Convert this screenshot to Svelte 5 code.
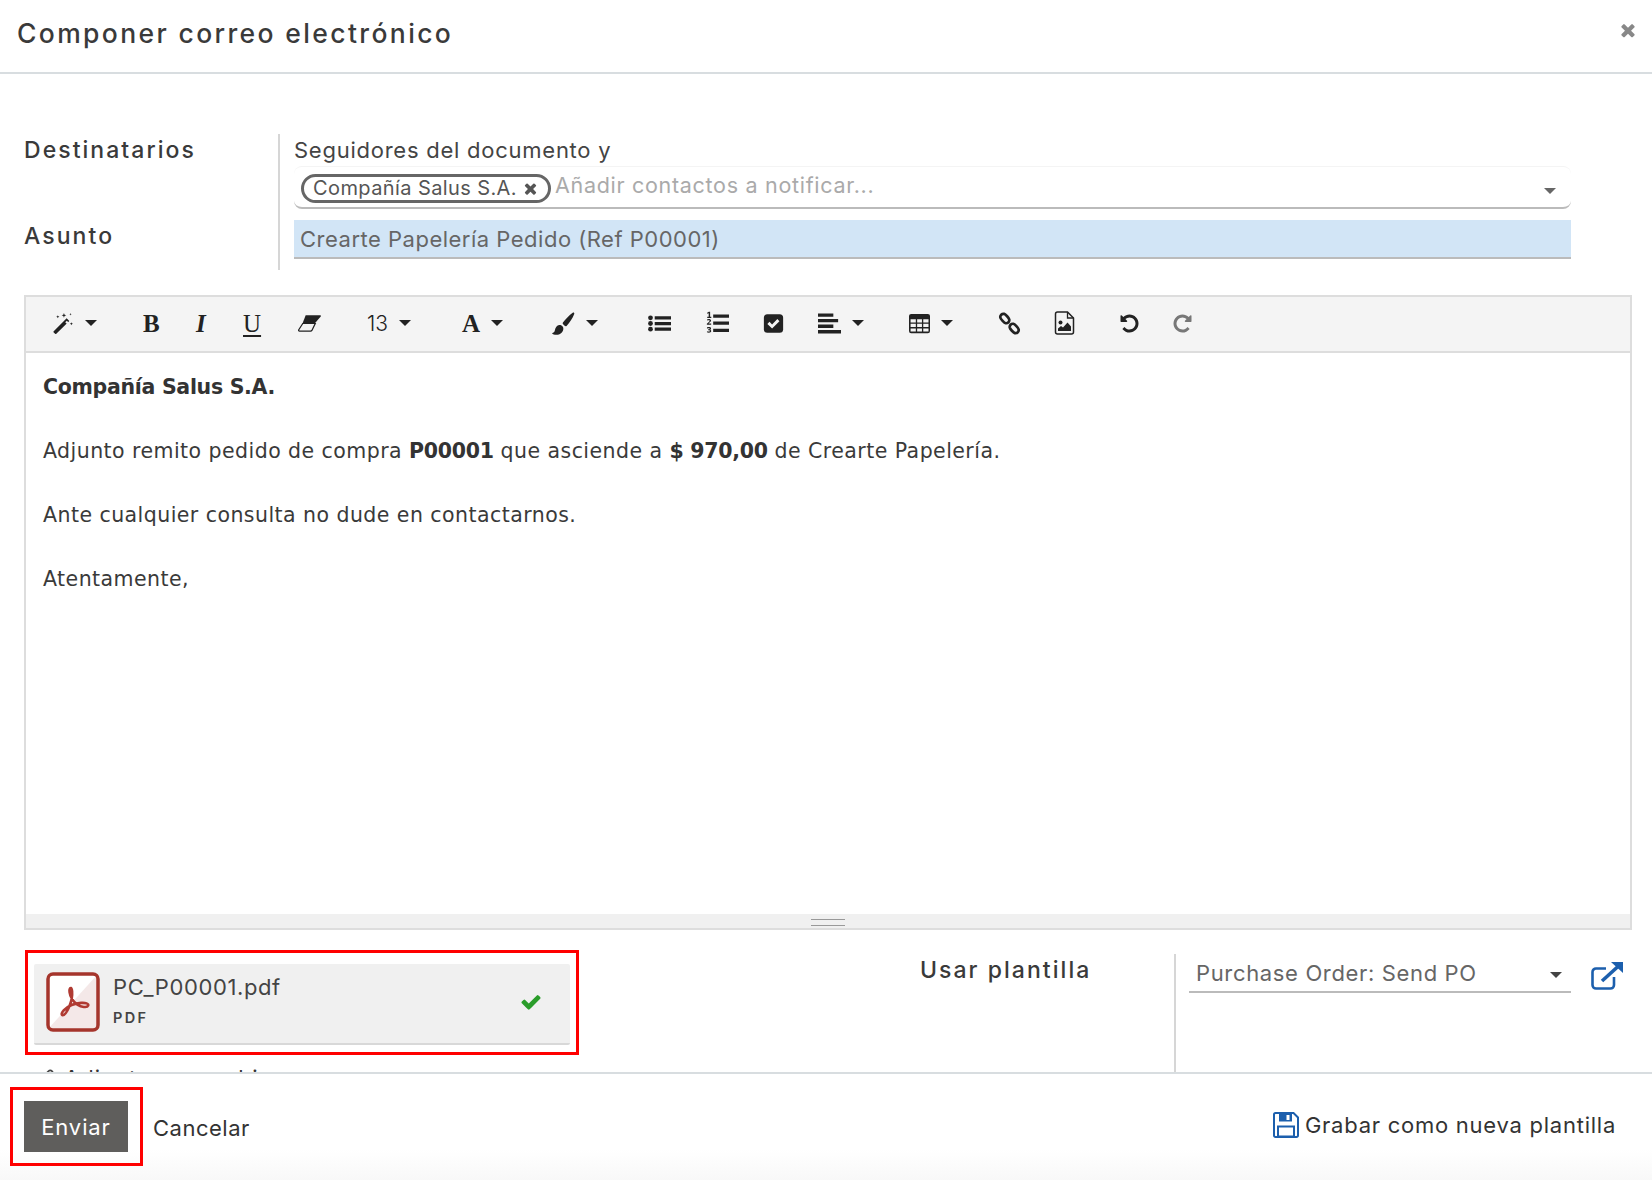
<script>
  const tools = [
    { t: 'wand', caret: true, w: 90 },
    { t: 'B', cls: 'serif bold', w: 53 },
    { t: 'I', cls: 'serif bold italic', w: 47 },
    { t: 'U', cls: 'serif under', w: 55 },
    { t: 'eraser', w: 69 },
    { t: '13', caret: true, cls: 'size', w: 95 },
    { t: 'A', caret: true, cls: 'serif bold', w: 90 },
    { t: 'brush', caret: true, w: 96 },
    { t: 'ul', w: 58 },
    { t: 'ol', w: 57 },
    { t: 'check', w: 55 },
    { t: 'align', caret: true, w: 91 },
    { t: 'table', caret: true, w: 89 },
    { t: 'link', w: 56 },
    { t: 'image', w: 65 },
    { t: 'undo', w: 53 },
    { t: 'redo', w: 30 }
  ];
  const times = 'M1490 1322q0 40-28 68l-136 136q-28 28-68 28t-68-28l-294-294-294 294q-28 28-68 28t-68-28l-136-136q-28-28-28-68t28-68l294-294-294-294q-28-28-28-68t28-68l136-136q28-28 68-28t68 28l294 294 294-294q28-28 68-28t68 28l136 136q28 28 28 68t-28 68l-294 294 294 294q28 28 28 68z';
</script>

<div class="modal">
  <header class="head">
    <h1>Componer correo electrónico</h1>
    <svg class="close" viewBox="0 0 1792 1792"><path d={times}/></svg>
  </header>

  <main class="body">
    <section class="fields">
      <div class="labels">
        <span class="lab first">Destinatarios</span>
        <span class="lab">Asunto</span>
      </div>
      <div class="values">
        <div class="followers">Seguidores del documento y</div>
        <div class="many">
          <span class="tag">Compañía Salus S.A.
            <svg viewBox="0 0 1792 1792"><path d={times}/></svg>
          </span>
          <span class="placeholder">Añadir contactos a notificar...</span>
          <i class="tri grey"></i>
        </div>
        <div class="subject">Crearte Papelería Pedido (Ref P00001)</div>
      </div>
    </section>

    <section class="editor">
      <div class="toolbar">
        {#each tools as item}
          <span class="tool {item.cls ?? ''}" style="width:{item.w}px">
            {#if item.t === 'wand'}
              <svg class="ico" viewBox="0 0 24 24"><path d="M0.800 20.800 15.600 6l3 3L3.800 23.800a1 1 0 0 1-1.400 0L.800 22.200a1 1 0 0 1 0-1.400z"/><path d="M14 10.600l2 2 1.800-1.800-2-2z" fill="#f4f4f4"/><path d="M12.500 0l.7 2 2 .7-2 .7-.7 2-.7-2-2-.7 2-.7zM5.500 2.500l.5 1.300 1.300.5-1.300.5-.5 1.300-.5-1.300-1.300-.5 1.300-.5zM21 10.500l.5 1.300 1.300.5-1.300.5-.5 1.300-.5-1.300-1.300-.5 1.300-.5zM20 0l.4 1 1 .4-1 .4-.4 1-.4-1-1-.4 1-.4z"/></svg>
            {:else if item.t === 'eraser'}
              <svg class="ico wide" viewBox="0 0 24 18"><path d="M8 .5h15c.8 0 1 .6.700 1.200L17 9.500H4.500z"/><path d="M5 9 .8 15.500c-.4.7 0 1.500.8 1.500h11.500c.6 0 1.100-.3 1.400-.8L18 9z" fill="#f4f4f4" stroke="#222" stroke-width="1.300"/></svg>
            {:else if item.t === 'brush'}
              <svg class="ico big" viewBox="0 0 24 24"><path d="M21.600 .7c1-.7 2 .2 1.600 1.300-1.700 4.400-4.700 9-8 12.500-.6.600-1.400.5-2-.1l-1.600-1.600c-.6-.6-.6-1.300 0-2 2.800-3.800 6.400-7.500 10-10.100z"/><path d="M7.500 13.500c2.200-.3 4.800 1.600 4.300 4.400-.5 3.400-3.500 5.900-7.200 5.900-2 0-3.800-.7-4.600-1.700 1.500-.6 2.700-1.200 3-3.100.3-2.600 2.300-5.200 4.500-5.500z"/></svg>
            {:else if item.t === 'ul'}
              <svg class="ico wide" viewBox="0 0 24 18"><path d="M7 1.500h17v3.300H7zM7 7.400h17v3.300H7zM7 13.300h17v3.300H7z"/><circle cx="2.600" cy="3.100" r="2.500"/><circle cx="2.600" cy="9" r="2.500"/><circle cx="2.600" cy="14.900" r="2.500"/></svg>
            {:else if item.t === 'ol'}
              <svg class="ico wide tall" viewBox="0 0 24 24"><path d="M7.500 3h16.500v3.400H7.500zM7.500 10.500h16.500v3.400H7.500zM7.500 18h16.500v3.400H7.500z"/><path d="M1.200 1.200 3 .3h1.300v5.200h1.200v1.200H1.300V5.500h1.500V1.900l-1.600.5zM1 8.300c1.500-.9 4.300-.7 4.300 1.200 0 1.100-1 1.700-2.700 3h2.800v1.300H.9v-1c1.700-1.600 2.900-2.400 2.900-3.100 0-.8-1.500-.6-2.600-.2zM1 16.700c1.400-.7 4.300-.6 4.300 1.100 0 .6-.4 1-.9 1.200.7.200 1.100.7 1.100 1.400 0 2-3 2.100-4.500 1.300v-1.200c1.100.6 3 .7 3-.2 0-.6-.7-.7-1.800-.7v-1.100c1 0 1.600-.1 1.600-.6 0-.7-1.700-.5-2.800 0z"/></svg>
            {:else if item.t === 'check'}
              <svg class="ico" viewBox="0 0 24 24"><rect x="1" y="1.500" width="22" height="21" rx="4"/><path d="M5 12.500 7.400 10l3 3 6-6.200 2.400 2.500-8.400 8.400z" fill="#f4f4f4"/></svg>
            {:else if item.t === 'align'}
              <svg class="ico wide" viewBox="0 0 24 21"><path d="M0 0h16v3.500H0zM0 5.800h21v3.500H0zM0 11.600h16v3.500H0zM0 17.400h24v3.500H0z"/></svg>
            {:else if item.t === 'table'}
              <svg class="ico" viewBox="0 0 24 22"><path fill-rule="evenodd" d="M2.500 0h19A2.500 2.500 0 0 1 24 2.500v17a2.500 2.500 0 0 1-2.500 2.500h-19A2.500 2.500 0 0 1 0 19.500v-17A2.500 2.500 0 0 1 2.500 0zM1.800 6v3.800h6V6zm7.500 0v3.800h5.500V6zm7 0v3.800h6V6zM1.800 11.300v3.800h6v-3.800zm7.500 0v3.800h5.500v-3.800zm7 0v3.800h6v-3.800zM1.800 16.600v3.600h6v-3.600zm7.500 0v3.600h5.500v-3.600zm7 0v3.600h6v-3.600z"/></svg>
            {:else if item.t === 'link'}
              <svg class="ico big" viewBox="0 0 24 24" stroke="#222" stroke-width="2.800"><path fill="none" d="M6.500 2c-2.400-.6-4.600 1.600-4 4 .3 1.300 4 5.400 5.500 5.700 2.300.4 4.200-1.700 3.700-4C11.300 6.200 8 2.400 6.500 2zM17.500 22c2.400.6 4.600-1.600 4-4-.3-1.300-4-5.400-5.500-5.700-2.300-.4-4.200 1.700-3.700 4 .4 1.500 3.700 5.300 5.200 5.700z"/></svg>
            {:else if item.t === 'image'}
              <svg class="ico tall" viewBox="0 0 20 24"><path d="M3 1h10l6 6v14a2 2 0 0 1-2 2H3a2 2 0 0 1-2-2V3a2 2 0 0 1 2-2z" fill="#f4f4f4" stroke="#222" stroke-width="1.500"/><path d="M13 1v6h6" fill="none" stroke="#222" stroke-width="1.300"/><circle cx="6" cy="11.500" r="2"/><path d="M3.500 20v-2.500l3-2.500 2 1.500 4.500-5 3.500 4V20z"/></svg>
            {:else if item.t === 'undo'}
              <svg class="ico" viewBox="0 0 1792 1792"><path d="M1664 896q0 156-61 298t-164 245-245 164-298 61q-172 0-327-72.500t-264-204.500q-7-10-6.500-22.500t8.500-20.500l137-138q10-9 25-9 16 2 23 12 73 95 179 147t225 52q104 0 198.500-40.500t163.500-109.500 109.500-163.500 40.500-198.500-40.500-198.500-109.500-163.500-163.500-109.500-198.500-40.500q-98 0-188 35.500t-160 101.500l137 138q31 30 14 69-17 40-59 40h-448q-26 0-45-19t-19-45v-448q0-42 40-59 39-17 69 14l130 129q107-101 244.500-156.500t284.500-55.500q156 0 298 61t245 164 164 245 61 298z"/></svg>
            {:else if item.t === 'redo'}
              <svg class="ico muted" viewBox="0 0 1792 1792"><path d="M1664 256v448q0 26-19 45t-45 19h-448q-42 0-59-40-17-39 14-69l138-138q-148-137-349-137-104 0-198.500 40.500t-163.500 109.500-109.500 163.500-40.500 198.500 40.500 198.500 109.500 163.500 163.500 109.500 198.500 40.500q119 0 225-52t179-147q7-10 23-12 15 0 25 9l137 138q9 8 9.500 20.500t-7.500 22.500q-109 132-264 204.500t-327 72.500q-156 0-298-61t-245-164-164-245-61-298 61-298 164-245 245-164 298-61q147 0 284.500 55.500t244.500 156.500l130-129q29-31 70-14 39 17 39 59z"/></svg>
            {:else}
              {item.t}
            {/if}
            {#if item.caret}<i class="tri"></i>{/if}
          </span>
        {/each}
      </div>
      <div class="content">
        <p><b>Compañía Salus S.A.</b></p>
        <p>Adjunto remito pedido de compra <b>P00001</b> que asciende a <b>$ 970,00</b> de Crearte Papelería.</p>
        <p>Ante cualquier consulta no dude en contactarnos.</p>
        <p>Atentamente,</p>
      </div>
      <div class="resize"><span></span></div>
    </section>

    <section class="lower">
      <div class="left">
        <div class="redbox">
          <div class="attach">
            <svg class="pdf" viewBox="0 0 54 60">
              <rect x="2" y="2" width="50" height="56" rx="5" fill="#fff"/>
              <path d="M3 56 51 3v50a4 4 0 0 1-4 4H4z" fill="#f4e8e8"/>
              <rect x="2" y="2" width="50" height="56" rx="5" fill="none" stroke="#a5352c" stroke-width="3.500"/>
              <path d="M25 16c-1.500-.2-1.700 2-1.400 4.300.6 4.200 4 9.500 7.800 12.300 3.800 2.400 9.800 3.500 10.800 1 .6-2-2.600-3-7-2.700-6 .4-13.400 3.500-17.300 7.300-2.200 2.300-3 4.600-1.300 4.900 2 .2 4.600-3.800 6.500-8.200 2-4.700 3.400-11.200 3-15.500-.2-2-.8-3.300-1.100-3.400z" fill="none" stroke="#b03a32" stroke-width="2.600"/>
            </svg>
            <div class="fileinfo">
              <div class="fname">PC_P00001.pdf</div>
              <div class="ftype">PDF</div>
            </div>
            <svg class="tick" viewBox="0 0 1792 1792"><path d="M1671 566q0 40-28 68l-724 724-136 136q-28 28-68 28t-68-28l-136-136-362-362q-28-28-28-68t28-68l136-136q28-28 68-28t68 28l294 295 656-657q28-28 68-28t68 28l136 136q28 28 28 68z"/></svg>
          </div>
        </div>
        <div class="addfile">
          <svg viewBox="0 0 24 24"><path fill="none" stroke="#444" stroke-width="2" d="M19 11 11 19a5 5 0 0 1-7-7l9-9a3.500 3.500 0 0 1 5 5l-9 9a1.500 1.500 0 0 1-2-2l8-8"/></svg>
          Adjuntar un archivo
        </div>
      </div>
      <div class="tpl">
        <div class="tpl-label">Usar plantilla</div>
        <div class="tpl-value">
          <div class="select"><span>Purchase Order: Send PO</span><i class="tri dark"></i></div>
          <svg class="ext" viewBox="0 0 32 28"><path d="M23 15v8a3.500 3.500 0 0 1-3.500 3.500H5A3.500 3.500 0 0 1 1.500 23V10A3.500 3.500 0 0 1 5 6.500h10" fill="none" stroke="#1c5fad" stroke-width="2.600"/><path d="M11 19 27 4.500" fill="none" stroke="#1c5fad" stroke-width="3.600"/><path d="M32 0H20l12 11z" fill="#1c5fad"/></svg>
        </div>
      </div>
    </section>
  </main>

  <footer class="foot">
    <div class="redbtn"><button class="send">Enviar</button></div>
    <span class="cancel">Cancelar</span>
    <span class="savetpl">
      <svg viewBox="0 0 26 26"><path d="M2.500 1h18L25 5.500v18a1.500 1.500 0 0 1-1.500 1.500h-21A1.500 1.500 0 0 1 1 23.500v-21A1.500 1.500 0 0 1 2.500 1z" fill="#fff" stroke="#1c5fad" stroke-width="2"/><path d="M6 1.500h13v8H6z" fill="#1c5fad"/><path d="M13.500 3h3v5h-3z" fill="#fff"/><path d="M5 14.500h16V24.500H5z" fill="none" stroke="#1c5fad" stroke-width="2"/></svg>
      Grabar como nueva plantilla
    </span>
  </footer>
</div>

<style>
  :global(body) { margin: 0; background: #fff; }
  .modal { width: 1652px; height: 1180px; display: flex; flex-direction: column; font-family: Inter, "Liberation Sans", sans-serif; color: #333; overflow: hidden; background: #fff; }
  .head { height: 72px; border-bottom: 2px solid #d8dde0; display: flex; justify-content: space-between; align-items: flex-start; padding: 0 14px 0 17px; flex: none; }
  h1 { margin: 16px 0 0; font-size: 26.500px; line-height: 34px; font-weight: 500; letter-spacing: 2.370px; color: #3a3a3a; }
  .close { width: 20px; height: 20px; margin-top: 20px; fill: #888; }

  .body { flex: none; height: 1000px; overflow: hidden; padding: 60px 20px 0 24px; box-sizing: border-box; }
  .fields { display: flex; height: 136px; }
  .labels { width: 254px; display: flex; flex-direction: column; flex: none; }
  .lab { font-size: 23px; font-weight: 500; letter-spacing: 2.050px; line-height: 32px; color: #3a3a3a; }
  .lab.first { height: 86px; }
  .values { flex: 1; border-left: 2px solid #d6d6d6; padding-left: 14px; margin-right: 61px; min-width: 0; }
  .followers { font-size: 22px; line-height: 32px; color: #444; letter-spacing: .75px; }
  .many { height: 43px; box-sizing: border-box; border-bottom: 2px solid #bbb; border-top: 1px solid #f4f4f4; border-radius: 8px; display: flex; align-items: center; padding-left: 7px; }
  .tag { height: 29px; box-sizing: border-box; width: 250px; flex: none; border: 3px solid #666; border-radius: 15px; padding: 0 9px 0 9px; display: flex; align-items: center; font-size: 20px; letter-spacing: .4px; color: #555; white-space: nowrap; justify-content: space-between; margin-top: 2px; }
  .tag svg { width: 17px; height: 17px; fill: #555; flex: none; }
  .placeholder { margin-left: 4px; margin-top: -4px; font-size: 21.500px; color: #aaa; letter-spacing: .7px; }
  .many .tri { margin-left: auto; margin-right: 15px; margin-top: 8px; }
  .subject { margin-top: 11px; height: 39px; box-sizing: border-box; background: #d2e5f6; border-bottom: 2px solid #bbb; padding-left: 6px; font-size: 22px; line-height: 38px; color: #666; letter-spacing: .5px; }

  .editor { margin-top: 25px; width: 1608px; height: 635px; box-sizing: border-box; border: 2px solid #ddd; display: flex; flex-direction: column; }
  .toolbar { height: 56px; flex: none; box-sizing: border-box; background: #f4f4f4; border-bottom: 2px solid #ddd; display: flex; align-items: center; padding: 0 0 2px 27px; color: #222; }
  .tool { display: inline-flex; align-items: center; line-height: 1; font-size: 25px; flex: none; }
  .serif { font-family: "Liberation Serif", serif; }
  .bold { font-weight: 700; }
  .italic { font-style: italic; }
  .under { text-decoration: underline; text-underline-offset: 3px; }
  .size { font-size: 21px; font-family: Inter, sans-serif; font-weight: 300; }
  .ico { width: 21px; height: 21px; fill: #222; display: block; flex: none; }
  .ico.wide { width: 23px; }
  .ico.tall { height: 24px; }
  .ico.big { width: 23px; height: 25px; }
  .ico.muted { fill: #777; }
  .tri { display: inline-block; width: 0; height: 0; border-left: 6px solid transparent; border-right: 6px solid transparent; border-top: 6px solid #222; margin-left: 11px; flex: none; }
  .tri.grey { border-top-color: #666; }
  .tri.dark { border-top-color: #444; margin-top: 4px; }

  .content { flex: 1; padding: 18px 17px 0; font-family: "DejaVu Sans", sans-serif; font-size: 20.500px; color: #3a3a3a; line-height: 32px; letter-spacing: .45px; }
  .content p { margin: 0 0 32px; }
  .content b { letter-spacing: -.3px; color: #333; }
  .resize { height: 14px; flex: none; background: #f0f0f0; display: flex; justify-content: center; align-items: center; }
  .resize span { display: block; width: 34px; height: 5px; margin-top: 3px; border-top: 1px solid #999; border-bottom: 1px solid #999; }

  .lower { display: flex; margin-top: 20px; margin-left: 1px; }
  .left { width: 554px; flex: none; }
  .redbox { height: 105px; box-sizing: border-box; border: 3px solid #f00; padding: 11px 6px 0 6px; }
  .attach { height: 81px; box-sizing: border-box; background: #f0f0f0; border-bottom: 2px solid #d8d8d8; border-radius: 2px; display: flex; align-items: flex-start; padding: 8px 28px 0 12px; }
  .pdf { width: 54px; height: 60px; flex: none; }
  .fileinfo { margin-left: 13px; flex: 1; }
  .fname { font-size: 22px; line-height: 30px; color: #444; letter-spacing: .6px; }
  .ftype { font-size: 14.500px; font-weight: 600; letter-spacing: 2.300px; line-height: 18px; margin-top: 7px; color: #444; }
  .tick { width: 22px; height: 22px; fill: #2a9d2a; margin-top: 19px; }
  .addfile { display: flex; align-items: center; gap: 7px; margin: 10px 0 0 13px; font-size: 22px; line-height: 26px; letter-spacing: 1px; color: #333; white-space: nowrap; }
  .addfile svg { width: 19px; height: 19px; flex: none; }

  .tpl { flex: 1; display: flex; min-width: 0; }
  .tpl-label { box-sizing: border-box; width: 595px; padding: 3px 0 0 341px; white-space: nowrap; font-size: 23px; font-weight: 500; letter-spacing: 2.050px; line-height: 34px; color: #3a3a3a; flex: none; }
  .tpl-value { border-left: 2px solid #d6d6d6; padding-left: 13px; margin-top: 4px; height: 200px; display: flex; align-items: flex-start; flex: 1; }
  .select { width: 382px; height: 39px; box-sizing: border-box; border-bottom: 2px solid #bbb; display: flex; justify-content: space-between; align-items: center; padding: 0 9px 0 7px; font-size: 22px; letter-spacing: .65px; color: #666; flex: none; }
  .ext { width: 32px; height: 28px; margin: 8px 0 0 20px; flex: none; }

  .foot { flex: none; height: 110px; margin-top: -2px; border-top: 2px solid #d8dde0; background: linear-gradient(#fff 70%, #f8f8f8); display: flex; align-items: flex-start; padding: 0 36px 0 10px; box-sizing: border-box; }
  .redbtn { margin-top: 13px; width: 133px; height: 79px; box-sizing: border-box; border: 3px solid #f00; padding: 11px 0 0 11px; flex: none; }
  .send { width: 104px; height: 51px; display: block; border: 0; background: #5f5e5c; color: #fff; font: 400 22px Inter, sans-serif; letter-spacing: .9px; padding: 0; }
  .cancel { margin: 39px 0 0 10px; font-size: 22px; line-height: 30px; color: #333; letter-spacing: .5px; }
  .savetpl { margin: 36px 0 0 auto; display: flex; align-items: center; gap: 6px; font-size: 22px; line-height: 30px; color: #333; letter-spacing: .75px; }
  .savetpl svg { width: 26px; height: 26px; flex: none; }
</style>
